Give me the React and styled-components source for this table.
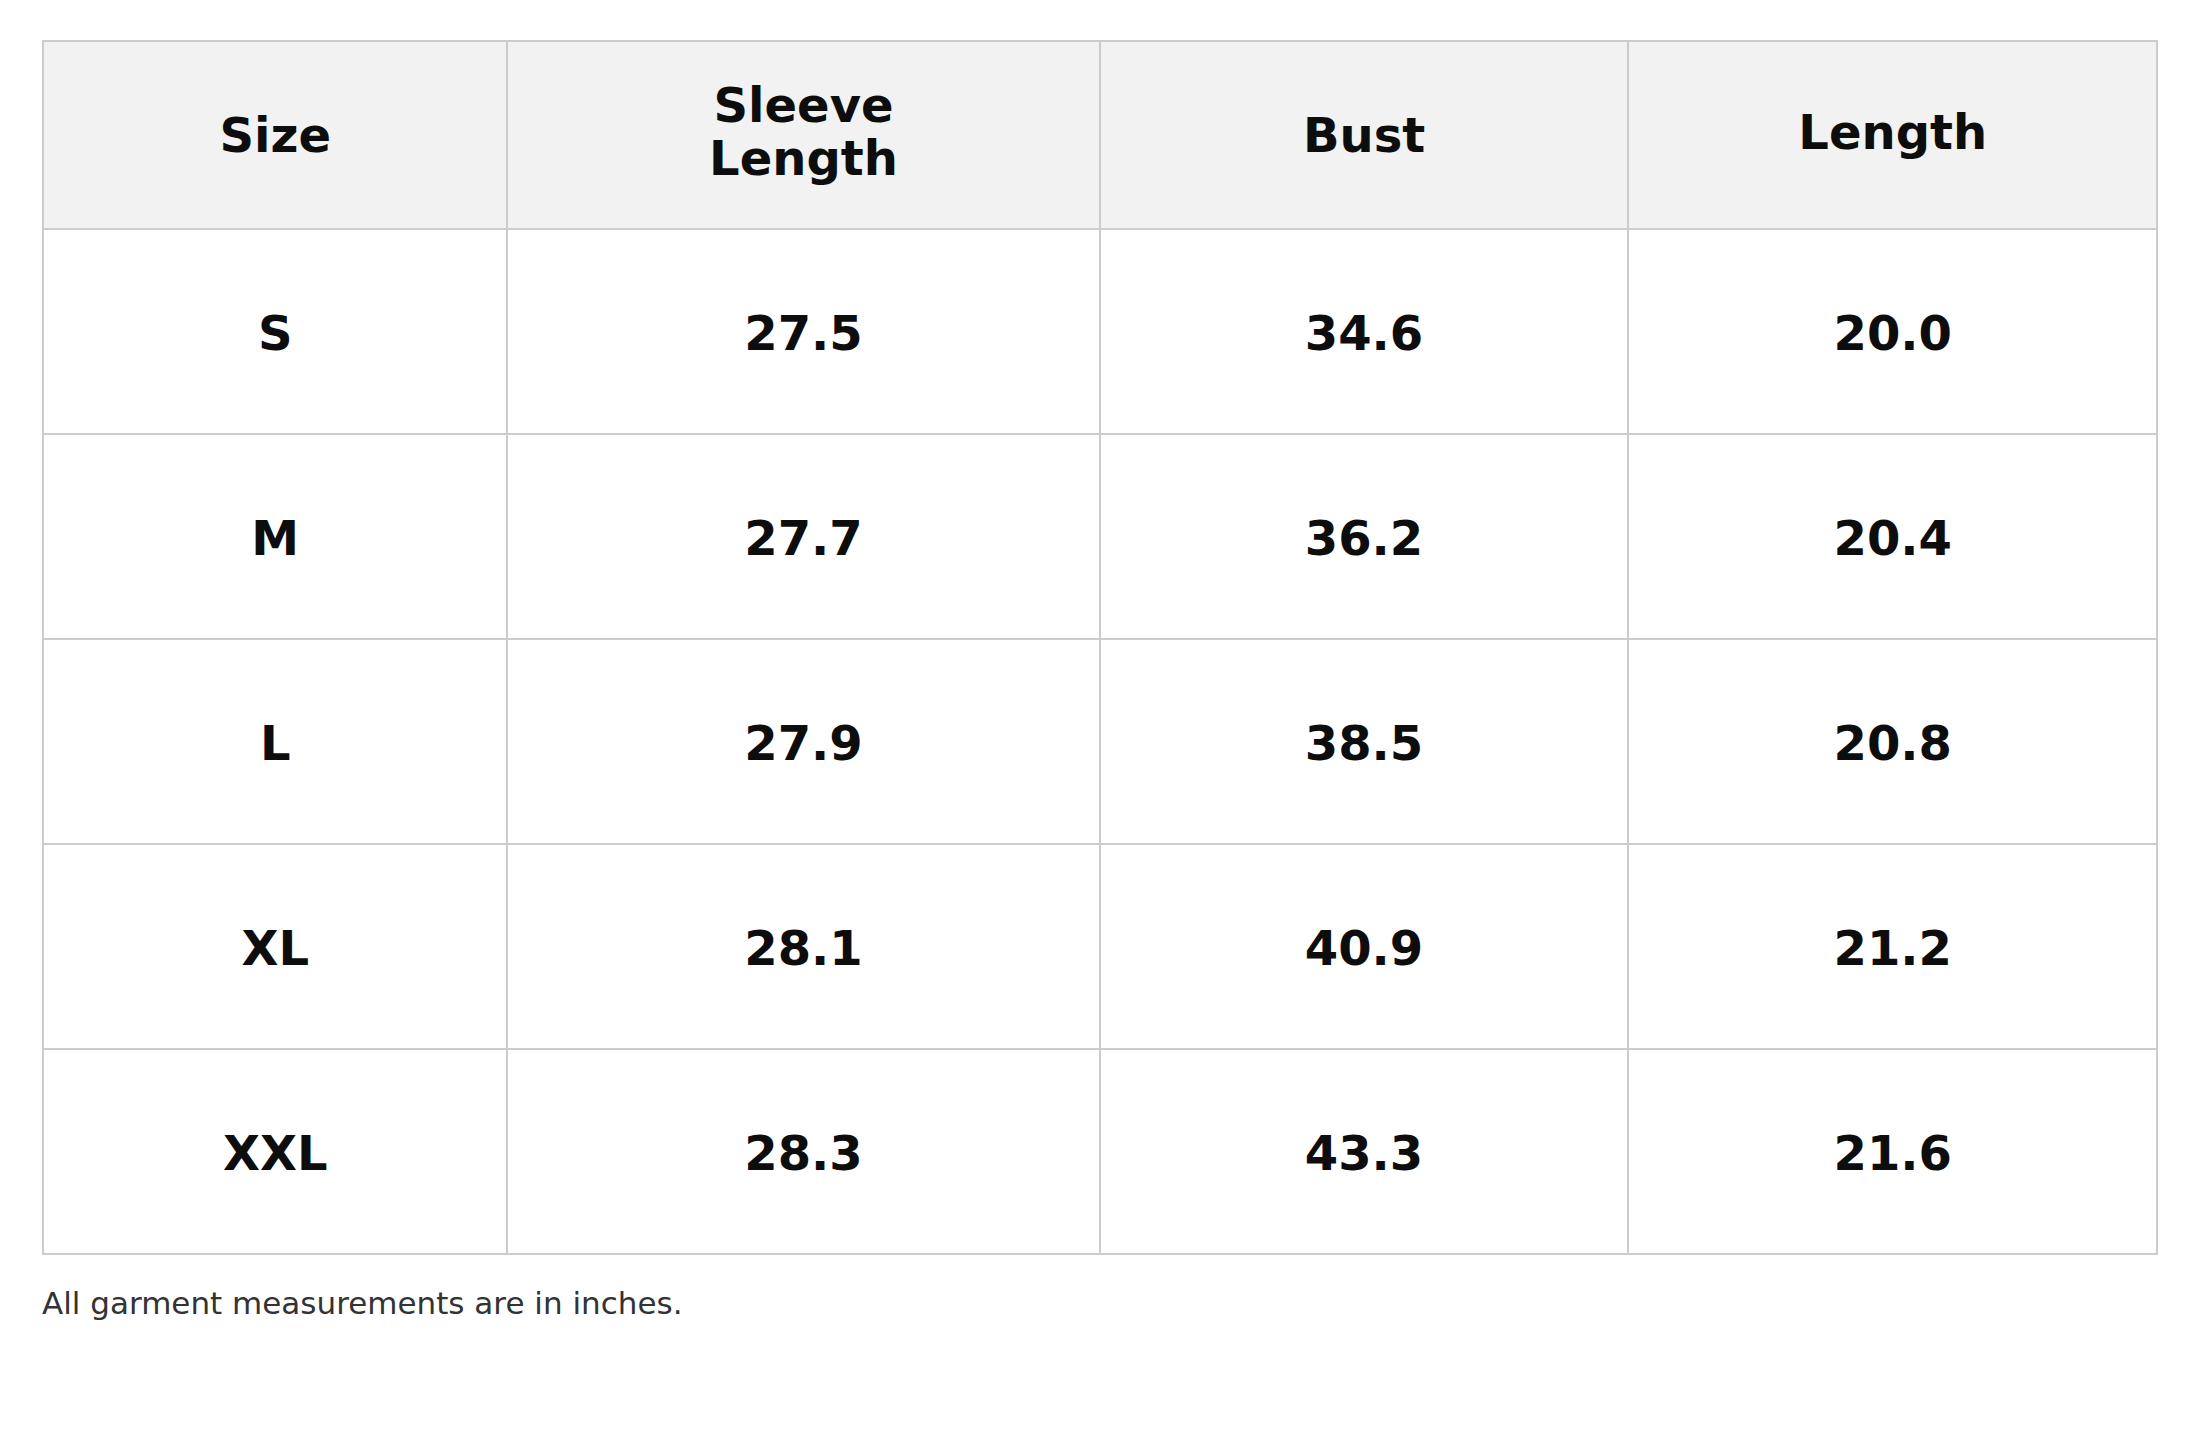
import React from "react"
import styled, { createGlobalStyle } from "styled-components"

const GlobalStyle = createGlobalStyle`
  html, body {
    margin: 0;
    padding: 0;
    background: #ffffff;
  }
  body {
    font-family: "DejaVu Sans", Verdana, sans-serif;
    color: #111111;
  }
`

const Page = styled.main`
  padding: 40px 42px;
`

const SizeTable = styled.table`
  width: 100%;
  border-collapse: collapse;
  table-layout: fixed;
  border: 2px solid #cccccc;
`

const Col = styled.col`
  width: ${(p) => p.$width};
`

// labels with a descender sit a little higher, as in the source chart
const HeadCell = styled.th`
  background: #f2f2f2;
  border: 2px solid #cccccc;
  padding: ${(p) => (p.$descender ? "37px 24px 43px" : "40px 24px")};
  font-size: 48px;
  line-height: 53px;
  font-weight: 700;
  color: #0d0d0d;
  text-align: center;
  vertical-align: middle;
`

const Cell = styled.td`
  border: 2px solid #cccccc;
  padding: 77px 24px 73px;
  font-size: 48px;
  line-height: 53px;
  font-weight: 700;
  color: #0d0d0d;
  text-align: center;
  vertical-align: middle;
`

const Note = styled.p`
  margin: 30px 0 0;
  font-size: 31px;
  line-height: 36px;
  color: #333333;
`

const columns = [
  { label: "Size", width: "21.97%" },
  { label: <>Sleeve<br />Length</>, width: "28.01%", descender: true },
  { label: "Bust", width: "25.02%" },
  { label: "Length", width: "25%", descender: true },
]

const rows = [
  ["S", "27.5", "34.6", "20.0"],
  ["M", "27.7", "36.2", "20.4"],
  ["L", "27.9", "38.5", "20.8"],
  ["XL", "28.1", "40.9", "21.2"],
  ["XXL", "28.3", "43.3", "21.6"],
]

export default function App() {
  return (
    <>
      <GlobalStyle />
      <Page>
        <SizeTable>
          <colgroup>
            {columns.map((c, i) => (
              <Col key={i} $width={c.width} />
            ))}
          </colgroup>
          <thead>
            <tr>
              {columns.map((c, i) => (
                <HeadCell key={i} $descender={c.descender}>
                  {c.label}
                </HeadCell>
              ))}
            </tr>
          </thead>
          <tbody>
            {rows.map((row) => (
              <tr key={row[0]}>
                {row.map((value, i) => (
                  <Cell key={i}>{value}</Cell>
                ))}
              </tr>
            ))}
          </tbody>
        </SizeTable>
        <Note>All garment measurements are in inches.</Note>
      </Page>
    </>
  )
}
